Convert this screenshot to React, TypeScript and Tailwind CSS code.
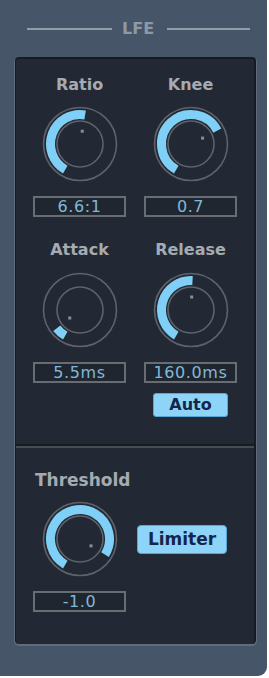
import React from "react";

const C = 38;

function pt(r: number, deg: number) {
  const a = (deg * Math.PI) / 180;
  return [C + r * Math.sin(a), C - r * Math.cos(a)];
}

function Knob({ end }: { end: number }) {
  const start = 210;
  const r = 29.5;
  const [x0, y0] = pt(r, start);
  const [x1, y1] = pt(r, end);
  const large = end - start > 180 ? 1 : 0;
  const [dx, dy] = pt(13, end);
  return (
    <svg width="76" height="76" viewBox="0 0 76 76" className="block">
      <circle cx={C} cy={C} r={36.5} fill="none" stroke="#5e626a" strokeWidth={1.6} />
      <path
        d={`M ${x0} ${y0} A ${r} ${r} 0 ${large} 1 ${x1} ${y1}`}
        fill="none"
        stroke="#7fcff6"
        strokeWidth={9}
      />
      <circle cx={C} cy={C} r={23} fill="#232934" stroke="#5e626a" strokeWidth={1.6} />
      <rect x={dx - 1.5} y={dy - 1.5} width={3} height={3} fill="#8a8e95" />
    </svg>
  );
}

function ValueBox({ text }: { text: string }) {
  return (
    <div className="w-[93px] h-[21px] border-2 border-[#686c73] bg-[#20262f] flex items-center justify-center text-[16px] leading-none tracking-[0.6px] text-[#80b8d8]">
      {text}
    </div>
  );
}

function Label({ text }: { text: string }) {
  return (
    <div className="h-[20px] leading-[20px] text-[16px] font-bold text-[#a6abb2]">{text}</div>
  );
}

export default function App() {
  return (
    <div className="bg-white w-[269px] h-[678px]" style={{ fontFamily: '"DejaVu Sans", sans-serif' }}>
      <div className="w-[267px] h-[676px] bg-[#475568] rounded-br-[9px] pt-[18px]">
        <div className="flex items-center h-[22px] pl-[27px]">
          <div className="w-[85px] h-[2px] bg-[#939daa]" />
          <div className="ml-[10px] w-[32px] text-center text-[16px] font-bold text-[#8f99a5] leading-[22px]">LFE</div>
          <div className="ml-[13px] w-[83px] h-[2px] bg-[#939daa]" />
        </div>
        <div className="ml-[15px] mt-[17px] w-[241px] h-[587px] bg-[#232934] rounded-[4px] border-t-2 border-l border-r-2 border-[#161b22] shadow-[0_1px_0_1px_#5f6c7c] flex flex-col">
          <div className="pl-[8px] grid grid-cols-[111px_111px]">
            <div className="flex flex-col items-center">
              <div className="mt-[16px]"><Label text="Ratio" /></div>
              <div className="mt-[11px]"><Knob end={370} /></div>
              <div className="mt-[14px]"><ValueBox text="6.6:1" /></div>
              <div className="mt-[23px]"><Label text="Attack" /></div>
              <div className="mt-[12px]"><Knob end={232} /></div>
              <div className="mt-[14px]"><ValueBox text="5.5ms" /></div>
            </div>
            <div className="flex flex-col items-center">
              <div className="mt-[16px]"><Label text="Knee" /></div>
              <div className="mt-[11px]"><Knob end={423} /></div>
              <div className="mt-[14px]"><ValueBox text="0.7" /></div>
              <div className="mt-[23px]"><Label text="Release" /></div>
              <div className="mt-[12px]"><Knob end={363} /></div>
              <div className="mt-[14px]"><ValueBox text="160.0ms" /></div>
              <div className="mt-[10px] w-[75px] h-[24px] rounded-[3px] bg-[#8ed4f9] border border-[#5aa6d6] flex items-center justify-center text-[16px] font-bold text-[#14264a] leading-none">
                Auto
              </div>
            </div>
          </div>
          <div className="mt-[27px] h-[2px] bg-[#171b22]" />
          <div className="h-[2px] bg-[#464b54]" />
          <div className="pl-[19px] mt-[22px] h-[20px] leading-[20px] text-[17px] font-bold text-[#a6abb2]">Threshold</div>
          <div className="pl-[8px] flex items-start">
            <div className="w-[111px] flex flex-col items-center">
              <div className="mt-[11px]"><Knob end={482} /></div>
              <div className="mt-[14px]"><ValueBox text="-1.0" /></div>
            </div>
            <div className="ml-[2px] mt-[35px] w-[90px] h-[29px] rounded-[4px] bg-[#8ed4f9] border border-[#5aa6d6] flex items-center justify-center text-[17px] font-bold text-[#14264a] leading-none">
              Limiter
            </div>
          </div>
        </div>
      </div>
    </div>
  );
}
